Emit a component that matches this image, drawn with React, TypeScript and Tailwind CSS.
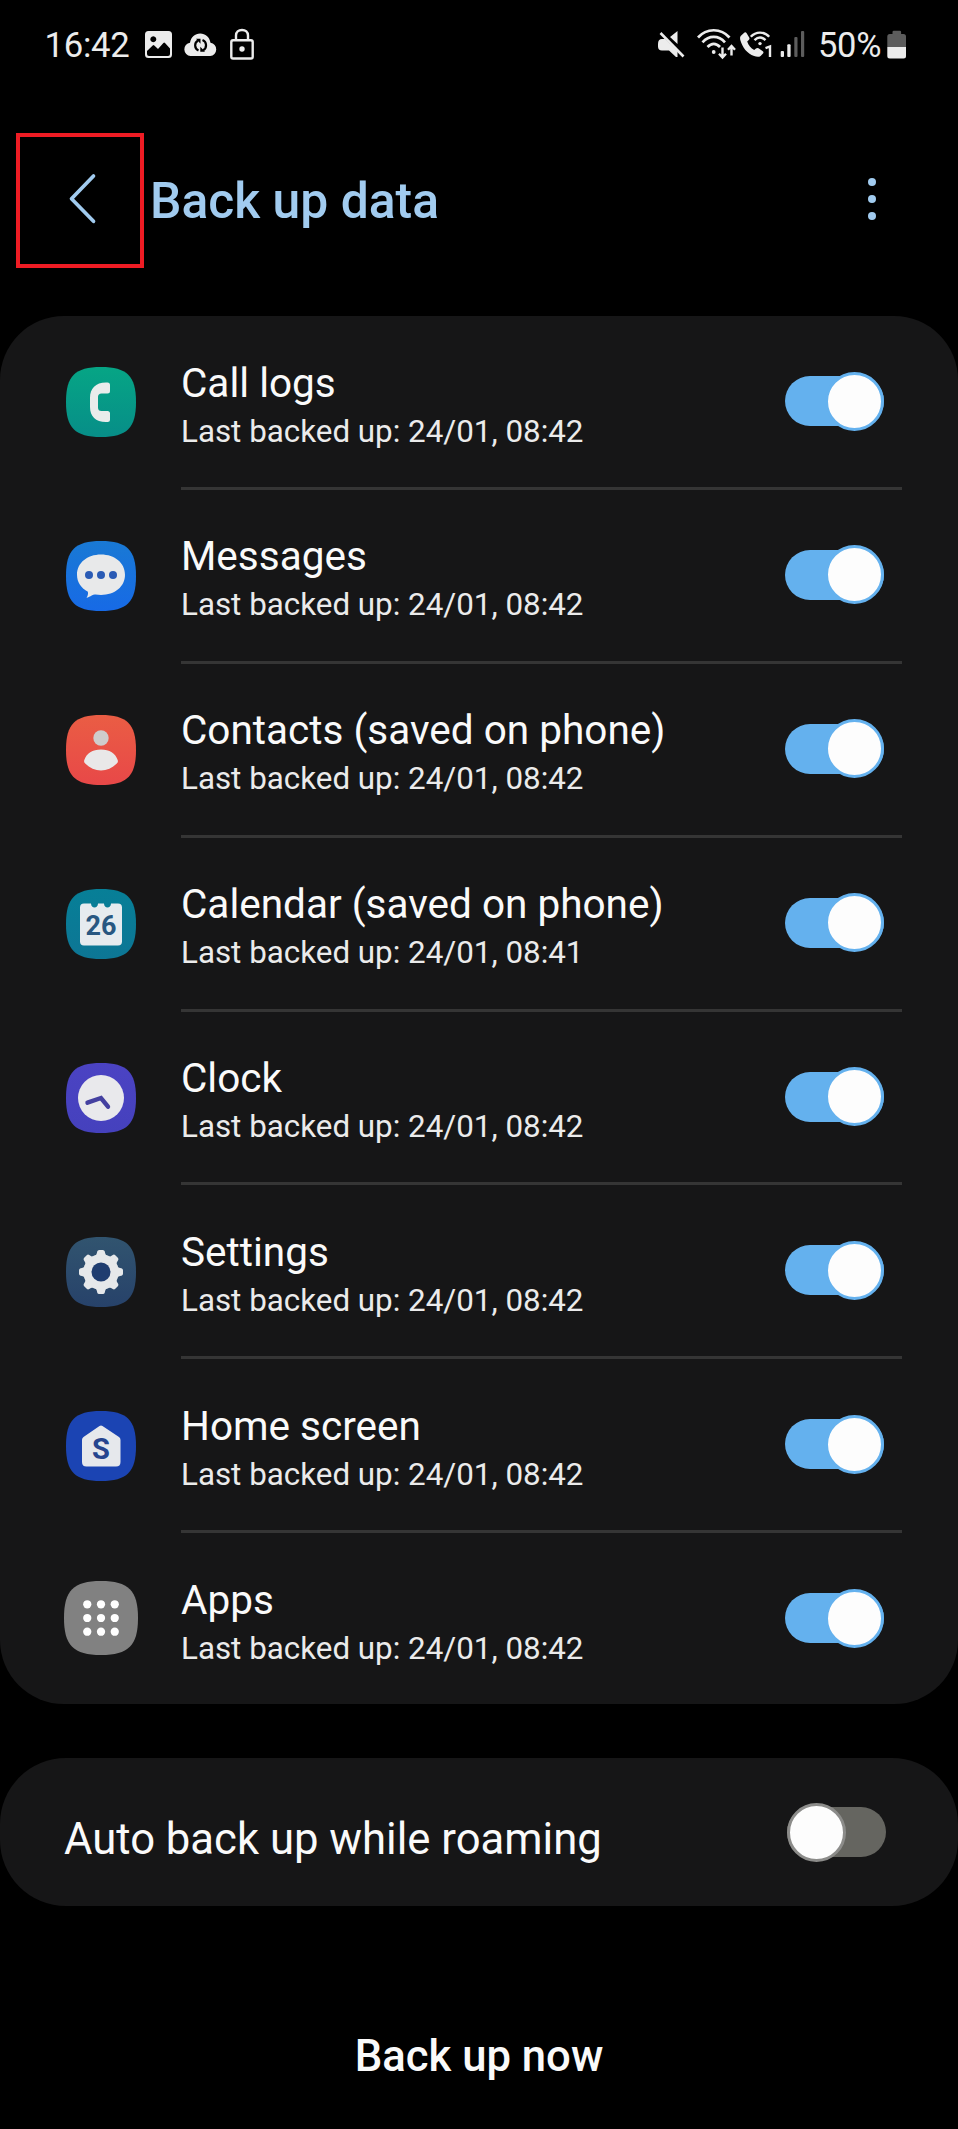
import React, { useState } from "react";

const SQUIRCLE = "M0 35C0 9 9 0 35 0S70 9 70 35 61 70 35 70 0 61 0 35Z";

const AppIcon: React.FC<{ id: string; from: string; to: string; children: React.ReactNode }> = ({ id, from, to, children }) => (
  <svg viewBox="0 0 70 70" className="w-full h-full">
    <defs>
      <linearGradient id={id} x1="0" y1="0" x2="0" y2="1">
        <stop offset="0" stopColor={from} />
        <stop offset="1" stopColor={to} />
      </linearGradient>
    </defs>
    <path d={SQUIRCLE} fill={`url(#${id})`} />
    {children}
  </svg>
);

const callIcon = (
  <AppIcon id="call" from="#06a585" to="#078e88">
    <path
      d="M40 15.500h1.500q2.500 0 2.500 2.500v6q0 2.500-2.500 2.500h-6q-3.500 0-3.500 3.500v10.500q0 3.500 3.500 3.500h6q2.500 0 2.500 2.500v6q0 2.500-2.500 2.500h-1.500c-10.500 0-16-6-16-15v-9c0-9.500 5.500-15.500 16-15.500Z"
      fill="#e9eceb"
    />
  </AppIcon>
);

const messagesIcon = (
  <AppIcon id="messages" from="#1979d4" to="#176ae6">
    <path
      d="M35 13.500c13.800 0 24 8.400 24 20.300S48.800 54 35 54c-1.800 0-3.700-.1-5.400-.4-1.400-.2-2.600.2-3.900 1-1.500.9-3.400 2-5.200 2.200 1.200-1.700 1.800-3.700 1.400-6C15.300 47.300 11 41.500 11 33.800c0-11.900 10.200-20.300 24-20.300Z"
      fill="#e8e9ea"
    />
    <circle cx="23" cy="34" r="4" fill="#2a5bb5" />
    <circle cx="35" cy="34" r="4" fill="#2a5bb5" />
    <circle cx="47" cy="34" r="4" fill="#2a5bb5" />
  </AppIcon>
);

const contactsIcon = (
  <AppIcon id="contacts" from="#ea5d44" to="#e84848">
    <circle cx="35" cy="23" r="7.700" fill="#cfcccb" />
    <path d="M35 34.500c8.500 0 14.500 4 16.700 10.500.5 1.500.2 2.500-.9 3.500-4.600 4.600-10 7-15.800 7s-11.200-2.400-15.800-7c-1.100-1-1.400-2-.9-3.500C20.500 38.500 26.500 34.500 35 34.500Z" fill="#e9e8e8" />
  </AppIcon>
);

const calendarIcon = (
  <AppIcon id="calendar" from="#077f97" to="#0d7695">
    <path
      d="M18 14.500h7c0 5.300 7 5.300 7 0h6c0 5.300 7 5.300 7 0h7q4 0 4 4v34q0 4-4 4H18q-4 0-4-4v-34q0-4 4-4Z"
      fill="#e6ebef"
    />
    <text x="35" y="45.500" textAnchor="middle" fill="#285781" className="font-['Roboto'] font-bold text-[27px]">
      26
    </text>
  </AppIcon>
);

const clockIcon = (
  <AppIcon id="clock" from="#4b43c3" to="#4541bd">
    <circle cx="35" cy="35" r="23" fill="#e9e9ec" />
    <path d="M21.500 39.700L35 35L42 43.700" fill="none" stroke="#4440a0" strokeWidth="4.400" strokeLinecap="round" />
  </AppIcon>
);

const settingsIcon = (
  <AppIcon id="settings" from="#31546f" to="#27426a">
    <circle cx="35" cy="35" r="17.800" fill="#e6e8ea" />
    {[0, 45, 90, 135, 180, 225, 270, 315].map((angle) => (
      <path key={angle} d="M29 19q1.500-.8 1.900-3l.3-1.400q.4-1.600 2-1.600h3.600q1.600 0 2 1.600l.3 1.400q.4 2.200 1.900 3Z" fill="#e6e8ea" transform={`rotate(${angle} 35 35)`} />
    ))}
    <circle cx="35" cy="35" r="9.500" fill="#203d70" />
  </AppIcon>
);

const homeIcon = (
  <AppIcon id="home" from="#1b44b3" to="#1b44b3">
    <path d="M33.500 15q1.500-1 3 0L53 26q1.500 1 1.500 3v22q0 4.500-4.500 4.500H20.500q-4.500 0-4.500-4.500V29q0-2 1.500-3Z" fill="#e6e8ec" />
    <text x="35" y="47.700" textAnchor="middle" fill="#26458f" className="font-['Roboto'] font-bold text-[29px]">
      S
    </text>
  </AppIcon>
);

const appsIcon = (
  <AppIcon id="apps" from="#818181" to="#818181">
    {[22, 35, 48].map((y) => [22, 35, 48].map((x) => <circle key={`${x}-${y}`} cx={x} cy={y} r="3.900" fill="#fff" />))}
  </AppIcon>
);

const items = [
  { name: "Call logs", time: "24/01, 08:42", icon: callIcon },
  { name: "Messages", time: "24/01, 08:42", icon: messagesIcon },
  { name: "Contacts (saved on phone)", time: "24/01, 08:42", icon: contactsIcon },
  { name: "Calendar (saved on phone)", time: "24/01, 08:41", icon: calendarIcon },
  { name: "Clock", time: "24/01, 08:42", icon: clockIcon },
  { name: "Settings", time: "24/01, 08:42", icon: settingsIcon },
  { name: "Home screen", time: "24/01, 08:42", icon: homeIcon },
  { name: "Apps", time: "24/01, 08:42", icon: appsIcon, large: true },
];

const Toggle: React.FC<{ on: boolean; onClick: () => void }> = ({ on, onClick }) => (
  <button
    onClick={onClick}
    className={`flex shrink-0 items-center w-[99px] h-[50px] rounded-full ${on ? "justify-end bg-[#64b1ee]" : "justify-start bg-[#656560]"}`}
  >
    <span className={`w-[59px] h-[59px] shrink-0 rounded-full bg-[#fdfdfd] border-[3px] ${on ? "border-[#64b1ee]" : "border-[#8c8c8a]"}`} />
  </button>
);

const StatusBar = () => (
  <div className="flex items-start h-[133px] pt-[27px] pl-[44.500px] pr-[51px] text-[#ececec]">
    <span className="w-[99.500px] text-[34.700px] leading-[37px] tracking-[-0.300px]">16:42</span>
    <svg viewBox="0 0 29 36" className="w-[29px] h-[36px]">
      <path
        fillRule="evenodd"
        d="M4.500 4h20q3.500 0 3.500 3.500v20q0 3.500-3.500 3.500h-20Q1 31 1 27.500v-20Q1 4 4.500 4ZM9.300 9.300a3 3 0 1 0 .01 0ZM3 24v3q0 2 2 2h19q2 0 2-2v-5.500l-5-5.500q-.8-.8-1.600 0l-5.400 6-3.700-3.500q-.8-.8-1.600 0Z"
        fill="currentColor"
      />
    </svg>
    <svg viewBox="0 0 35 36" className="ml-[10px] w-[35px] h-[36px]">
      <path d="M7.500 29a6.700 6.700 0 0 1-.5-13.300C8 10 12 6.500 17.200 6.500S26.500 10 27.500 15.700A6.700 6.700 0 0 1 27.200 29Z" fill="currentColor" />
      <path d="M15.500 23.500a5.600 5.600 0 0 1-.5-10M19.500 13a5.600 5.600 0 0 1 .5 10.200" fill="none" stroke="#000" strokeWidth="2.200" />
      <path d="M13 11.800h4.500v5ZM22 24.800h-4.700v-5Z" fill="#000" />
    </svg>
    <svg viewBox="0 0 25 36" className="ml-[12px] w-[25px] h-[36px]">
      <rect x="1.300" y="13.200" width="21.400" height="18.300" rx="1.800" fill="none" stroke="currentColor" strokeWidth="2.400" />
      <path d="M6 13V8.500C6 5 8.500 3 12 3s6 2 6 5.500V13" fill="none" stroke="currentColor" strokeWidth="2.400" />
      <circle cx="12" cy="22" r="2.700" fill="currentColor" />
    </svg>

    <div className="flex items-start ml-auto">
      <svg viewBox="0 0 28 36" className="w-[28px] h-[36px]">
        <path d="M0 17q0-5 4-5h3L19.500 24.500V30h-1.500L11 23.500H4q-4 0-4-4ZM19.500 4V17L12 10Z" fill="currentColor" />
        <path d="M2.500 6L25.500 29.500" stroke="currentColor" strokeWidth="2.600" />
      </svg>
      <svg viewBox="0 0 40 36" className="ml-[11px] w-[40px] h-[36px]">
        <g fill="none" stroke="currentColor" strokeWidth="2.700">
          <path d="M1 10.500C9.500.8 24 .8 32.500 10.500" />
          <path d="M5.500 15.300c6.500-7.200 16-7.200 22.500 0" />
          <path d="M10.500 20c4-4.200 8.500-4.200 12.500 0" />
          <path d="M25.500 20.500V30M22 26.800l3.500 3.700 3.500-3.700M34.500 28.500V20M31 22.700l3.500-3.700 3.500 3.700" strokeWidth="2.400" />
        </g>
        <circle cx="16.700" cy="25" r="1.900" fill="currentColor" />
      </svg>
      <svg viewBox="0 0 34 36" className="ml-[3px] w-[34px] h-[36px]">
        <path d="M1.200 8.500L4.500 5.600q1.200-.8 2 .4l2.700 4.500q.8 1.500-.4 2.500l-1.600 1.600c1.300 4 3.600 6.600 7 8.500l1.800-1.600q1.200-1 2.500-.2l4.300 3q1.200 1 .2 2.200l-2.400 2.400c-1.500 1.300-4 1-6.500.2C7 26.500 2.500 20.500.3 13c-.4-2-.3-3.500.9-4.500Z" fill="currentColor" />
        <g fill="none" stroke="currentColor" strokeWidth="2.400">
          <path d="M10.800 9.800c5-5.600 13.400-5.600 18.400 0" />
          <path d="M14.500 13.200c3.500-3.500 7.500-3.500 11 0" />
        </g>
        <circle cx="20" cy="16.600" r="1.700" fill="currentColor" />
        <path d="M25.500 21.200l4.500-1.700V30" fill="none" stroke="currentColor" strokeWidth="2.400" />
      </svg>
      <svg viewBox="0 0 26 36" className="ml-[6px] w-[26px] h-[36px]">
        <rect x="0.700" y="24" width="3.300" height="6" rx="1" fill="currentColor" />
        <rect x="7.300" y="17.200" width="3.300" height="12.800" rx="1" fill="currentColor" />
        <rect x="14.300" y="10" width="3.200" height="20" rx="1" fill="#5c5c5c" />
        <rect x="21" y="4" width="3.200" height="26" rx="1" fill="#5c5c5c" />
      </svg>
      <span className="w-[81px] pl-[12px] text-[34.500px] leading-[37px] tracking-[-0.300px]">50%</span>
      <svg viewBox="0 0 20 36" className="w-[20px] h-[36px]">
        <path d="M5.500 5q0-1.300 1.300-1.300h6q1.300 0 1.300 1.300v2h2.400q2.500 0 2.500 2.500V20H.300V9.500Q.300 7 2.800 7h2.700Z" fill="#5c5c5c" />
        <path d="M.300 20H19v9q0 2.500-2.500 2.500H2.800Q.300 31.500.300 29Z" fill="currentColor" />
      </svg>
    </div>
  </div>
);

const App: React.FC = () => {
  const [enabled, setEnabled] = useState(items.map(() => true));
  const [roaming, setRoaming] = useState(false);

  const toggleItem = (index: number) => {
    setEnabled(enabled.map((value, i) => (i === index ? !value : value)));
  };

  return (
    <div className="w-[958px] h-[2129px] overflow-hidden bg-black text-[#fafafa] font-['Roboto',sans-serif]">
      <StatusBar />

      <header className="flex items-start h-[183px] pl-4 text-[#a1cbef]">
        <button className="flex w-[128px] h-[135px] border-4 border-[#ee1c24]">
          <svg viewBox="0 0 120 127" className="w-[120px] h-[127px]" fill="none">
            <path d="M73.500 39L51.500 61.700L73.500 84.300" stroke="currentColor" strokeWidth="3.700" strokeLinecap="round" strokeLinejoin="round" />
          </svg>
        </button>
        <h1 className="ml-[6px] mt-[37px] text-[49.800px] leading-[62px] font-medium">Back up data</h1>
        <button className="flex flex-col gap-[8.400px] ml-auto mr-[82px] mt-[45px]">
          <span className="w-[8.400px] h-[8.400px] rounded-full bg-current" />
          <span className="w-[8.400px] h-[8.400px] rounded-full bg-current" />
          <span className="w-[8.400px] h-[8.400px] rounded-full bg-current" />
        </button>
      </header>

      <section className="h-[1388px] rounded-[64px] bg-[#161617] overflow-hidden">
        {items.map((item, index) => (
          <div key={item.name} className="flex h-[173.900px]">
            <div className="flex justify-center w-[181px] pl-[21px] pt-[51.300px]">
              <div className={item.large ? "w-[74px] h-[74px] -mt-[4px]" : "w-[70px] h-[70px]"}>{item.icon}</div>
            </div>
            <div className={`flex w-[721px] justify-between ${index < items.length - 1 ? "border-b-[3px] border-[#353535]" : ""}`}>
              <div className="pt-[42.500px] whitespace-nowrap">
                <h2 className="text-[40.500px] leading-[48px]">{item.name}</h2>
                <p className="text-[31.350px] leading-[49px] text-[#ebebeb]">Last backed up: {item.time}</p>
              </div>
              <div className="pt-[60px] pr-[18px]">
                <Toggle on={enabled[index]} onClick={() => toggleItem(index)} />
              </div>
            </div>
          </div>
        ))}
      </section>

      <section className="flex justify-between mt-[54px] h-[148px] pl-[64px] pr-[72px] rounded-[66px] bg-[#161617]">
        <h2 className="pt-[57px] text-[43.650px] leading-[50px] whitespace-nowrap">Auto back up while roaming</h2>
        <div className="pt-[49px]">
          <Toggle on={roaming} onClick={() => setRoaming(!roaming)} />
        </div>
      </section>

      <button className="block mx-auto mt-[126px] text-[43.650px] leading-[50px] font-medium">Back up now</button>
    </div>
  );
};

export default App;
